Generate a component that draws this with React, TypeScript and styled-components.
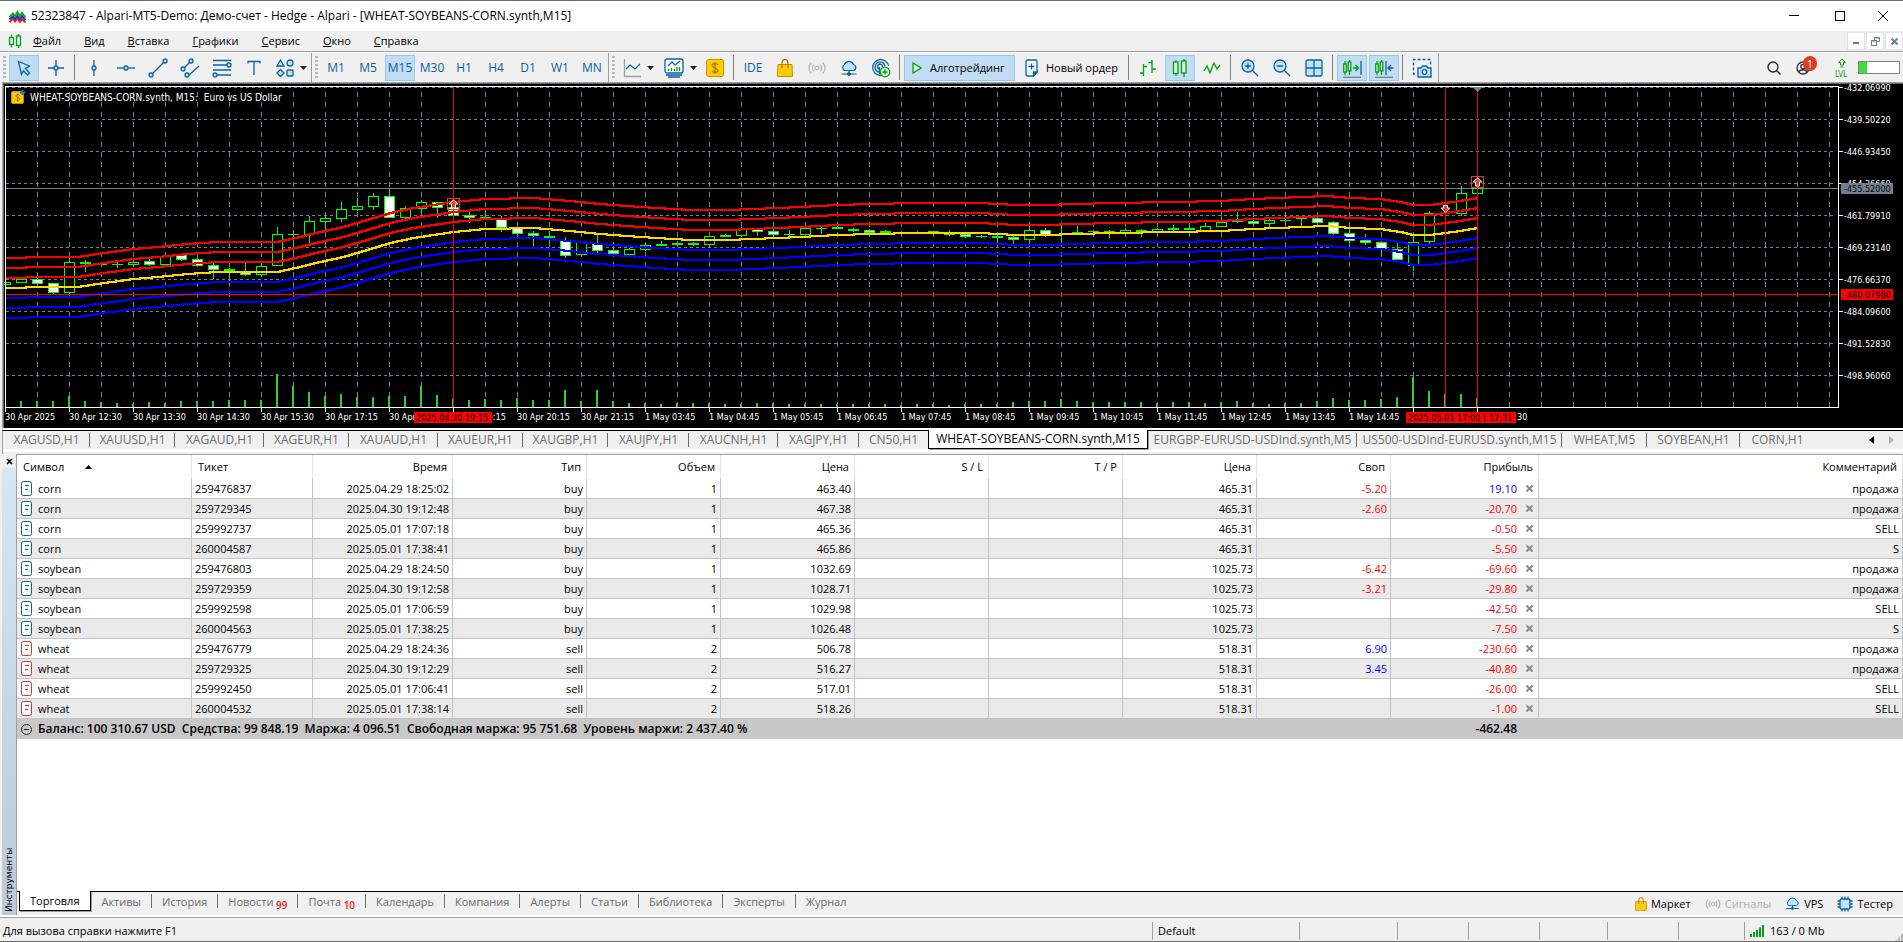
import React from "react";
import styled, { createGlobalStyle, css } from "styled-components";

const GlobalStyle = createGlobalStyle`
  *, *::before, *::after { box-sizing: border-box; }
  html, body { margin: 0; padding: 0; }
  body { background: #f0f0f0; color: #000; font: 12px/16px "Open Sans", "Liberation Sans", sans-serif; }
  button { font: inherit; color: inherit; background: none; border: 0; padding: 0; margin: 0; cursor: default; }
  a { color: inherit; text-decoration: none; }
  svg { display: block; flex: none; }
`;

const BLUE = "#0a62a3";
const SKY = "#bfe3fb";
const GREEN = "#00a019";
const SLATE = "#708090";

/* ---------- window frame ---------- */

const Window = styled.div`
  min-height: 100vh;
  display: flex;
  flex-direction: column;
  border-top: 1px solid #6d6d6d;
  border-bottom: 1px solid #6d6d6d;
`;

const TitleBar = styled.header`
  display: flex;
  align-items: center;
  height: 30px;
  padding: 0 0 0 9px;
  gap: 5px;
  background: #fff;
`;

const TitleText = styled.h1`
  margin: 0;
  font-size: 12px;
  line-height: 16px;
  font-weight: 400;
  white-space: nowrap;
`;

const CaptionButtons = styled.div`
  display: flex;
  margin-left: auto;
`;

const CaptionButton = styled.button`
  width: 46px;
  height: 30px;
  display: grid;
  place-items: center;
  &:last-child { width: 40px; }
`;

const MenuBar = styled.nav`
  display: flex;
  align-items: center;
  height: 21px;
  padding-left: 8px;
  border-bottom: 1px solid #a0a0a0;
`;

const MenuList = styled.div`
  display: flex;
  gap: 23px;
  margin-left: 11px;
`;

const MenuItem = styled.button`
  font-size: 11px;
  line-height: 16px;
`;

const MdiButtons = styled.div`
  display: flex;
  gap: 1px;
  margin-left: auto;
`;

const MdiButton = styled.button`
  width: 18px;
  height: 18px;
  display: grid;
  place-items: center;
  background: #fff;
  border: 1px solid #e3e3e3;
`;

/* ---------- toolbar ---------- */

const Toolbar = styled.div`
  display: flex;
  height: 30px;
  border-top: 1px solid #fff;
  padding-left: 1px;
`;

const ToolGroup = styled.div`
  display: flex;
  align-items: center;
  gap: 2px;
  padding-right: 1px;
  margin-right: 1px;
  border-right: 1px solid #a0a0a0;
`;

const Grip = styled.span`
  width: 3px;
  height: 24px;
  margin: 0 1px 0 2px;
  background: repeating-linear-gradient(#b8b8b8 0 2px, transparent 2px 4px);
`;

const ToolSeparator = styled.span`
  width: 1px;
  height: 25px;
  margin: 0 2px 0 1px;
  background: #808080;
`;

const ToolButton = styled.button<{ $active?: boolean; $width?: number }>`
  display: flex;
  align-items: center;
  justify-content: center;
  width: ${(p) => p.$width ?? 30}px;
  height: 26px;
  color: ${BLUE};
  border: 1px solid ${(p) => (p.$active ? "#90c8f6" : "transparent")};
  background: ${(p) => (p.$active ? "#c1dcf3" : "transparent")};
`;

const DropButton = styled(ToolButton)`
  width: 39px;
  justify-content: flex-start;
  padding-left: 4px;
  gap: 6px;
`;

const LabelButton = styled(ToolButton)`
  justify-content: flex-start;
  padding-left: 7px;
  color: #000;
  font-size: 11px;
  gap: 8px;
  white-space: nowrap;
`;

const ToolbarEnd = styled.div`
  display: flex;
  align-items: center;
  margin-left: auto;
  padding-right: 3px;
  gap: 9px;
`;

const RoundButton = styled.button<{ $width: number }>`
  position: relative;
  width: ${(p) => p.$width}px;
  height: 24px;
  display: grid;
  place-items: center start;
`;

const Badge = styled.span`
  position: absolute;
  top: 0;
  right: 9px;
  width: 14px;
  height: 15px;
  border-radius: 8px;
  background: #e03c20;
  color: #fff;
  font-size: 11px;
  line-height: 15px;
  text-align: center;
`;

const Battery = styled.span`
  width: 42px;
  height: 13px;
  border: 1px solid #808080;
  background: #fff;
  display: flex;

  &::before {
    content: "";
    width: 20%;
    background: #3ee03e;
  }
`;

/* ---------- chart ---------- */

const ChartFrame = styled.section`
  display: flex;
  height: 348px;
  margin-left: 2px;
  background: #000;
  border-top: 1px solid #a0a0a0;
  border-left: 1px solid #a0a0a0;
  border-bottom: 2px solid #fff;
`;

const ChartInner = styled.div`
  display: flex;
  flex: 1;
  min-width: 0;
  border-top: 1px solid #696969;
  border-left: 1px solid #696969;
`;

const Plot = styled.svg`
  flex: 1 1 0;
  min-width: 0;
  height: 344px;
`;

const PriceAxis = styled.svg`
  width: 65px;
  height: 344px;
`;

const AxisText = styled.text<{ $dark?: boolean; $large?: boolean }>`
  font: ${(p) => (p.$large ? 10 : 9)}px "DejaVu Sans Condensed", "DejaVu Sans", sans-serif;
  fill: ${(p) => (p.$dark ? "#000" : "#fff")};
`;

/* ---------- tab strips ---------- */

const tabBase = css`
  height: 18px;
  line-height: 18px;
  color: #6d6d6d;
  text-align: center;
  white-space: nowrap;
  position: relative;
`;

const ChartTabs = styled.nav`
  display: flex;
  height: 24px;
  margin-left: 2px;
  border-top: 1px solid #000;
  border-left: 1px solid #a0a0a0;
  background: linear-gradient(#f0f0f0 0 18px, #fff 18px 21px, #f0f0f0 21px);
`;

const divider = css`
  &::after {
    content: "";
    position: absolute;
    right: 0;
    top: 2px;
    width: 1px;
    height: 14px;
    background: #6d6d6d;
  }
`;

const ChartTab = styled.button<{ $width: number; $active?: boolean; $divided?: boolean }>`
  ${tabBase}
  width: ${(p) => p.$width}px;
  ${(p) => p.$divided && divider}
  ${(p) =>
    p.$active &&
    css`
      height: 19px;
      margin-top: -1px;
      color: #000;
      background: #fff;
      border: 1px solid #000;
      border-top: 0;
      box-shadow: 1px 1px 0 #a0a0a0;
    `}
`;

const TabScroll = styled.div`
  display: flex;
  align-items: center;
  gap: 15px;
  height: 18px;
  margin-left: auto;
  padding-right: 9px;
`;

const BottomTabs = styled.div`
  display: flex;
  height: 24px;
  border-top: 1px solid #000;
  padding: 0 10px 0 2px;
  background: #f0f0f0;
`;

const BottomTab = styled.button<{ $active?: boolean; $divided?: boolean }>`
  ${tabBase}
  height: 19px;
  padding: 0 11px 0 10px;
  font-size: 11px;
  ${(p) => p.$divided && divider}
  ${(p) =>
    p.$active &&
    css`
      height: 20px;
      margin-top: -1px;
      color: #000;
      background: #fff;
      border: 1px solid #000;
      border-top: 0;
      box-shadow: 1px 1px 0 #a0a0a0;
    `}
  sub {
    font-size: 10px;
    line-height: 0;
    font-weight: 600;
    color: #f01818;
  }
`;

const Services = styled.div`
  display: flex;
  align-items: center;
  gap: 14px;
  margin-left: auto;
`;

const ServiceLink = styled.a<{ $muted?: boolean }>`
  display: flex;
  align-items: center;
  gap: 4px;
  font-size: 11px;
  line-height: 16px;
  color: ${(p) => (p.$muted ? "#b0b0b0" : "#000")};
`;

/* ---------- toolbox ---------- */

const Toolbox = styled.section`
  flex: 1;
  display: flex;
  padding-left: 2px;
`;

const SideStrip = styled.div`
  width: 14px;
  display: flex;
  flex-direction: column;
`;

const SideClose = styled.button`
  height: 14px;
  display: grid;
  place-items: center;
`;

const SideCaption = styled.div`
  flex: 1;
  writing-mode: vertical-rl;
  transform: rotate(180deg);
  background: linear-gradient(to top, #d8e6f4, #bccad8);
  font: 9px/14px "DejaVu Sans", sans-serif;
  padding-inline-start: 3px;
`;

const ToolboxBody = styled.div`
  flex: 1;
  min-width: 0;
  display: flex;
  flex-direction: column;
  border-top: 1px solid #a0a0a0;
  border-left: 1px solid #a0a0a0;
  background: #fff;
`;

const TableArea = styled.div`
  flex: 1;
`;

const TradeTable = styled.table`
  width: 100%;
  table-layout: fixed;
  border-collapse: separate;
  border-spacing: 0;
`;

const HeadCell = styled.th<{ $left?: boolean }>`
  height: 24px;
  padding: 0 5px 0 6px;
  font-weight: 400;
  font-size: 11px;
  line-height: 16px;
  text-align: ${(p) => (p.$left ? "left" : "right")};
  border-right: 1px solid #e5e5e5;
  white-space: nowrap;
`;

const SortButton = styled.button`
  display: flex;
  align-items: center;
  gap: 21px;
`;

const Row = styled.tr`
  background: #fff;
  &:nth-child(even) { background: #eaeaea; }
`;

const tones = { plain: "#000", pos: "#0000ff", neg: "#ff0000" };

const Cell = styled.td<{ $left?: boolean; $tone?: keyof typeof tones }>`
  height: 20px;
  padding: 0 3px;
  font-size: 11px;
  line-height: 16px;
  color: ${(p) => tones[p.$tone ?? "plain"]};
  text-align: ${(p) => (p.$left ? "left" : "right")};
  border-right: 1px solid #c3c3c3;
  border-bottom: 1px solid #c3c3c3;
  white-space: nowrap;
`;

const SymbolBox = styled.span`
  display: flex;
  align-items: center;
  gap: 6px;
  padding-left: 1px;
`;

const ProfitBox = styled.span`
  display: flex;
  align-items: center;
  justify-content: flex-end;
  gap: 9px;
  padding-right: 2px;
`;

const CloseDeal = styled.button`
  display: block;
`;

const TotalCell = styled.td<{ $left?: boolean }>`
  height: 20px;
  padding: 0 22px 0 3px;
  background: #c8c8c8;
  font-size: 12px;
  line-height: 16px;
  font-weight: 600;
  text-align: ${(p) => (p.$left ? "left" : "right")};
  white-space: pre;
`;

/* ---------- status bar ---------- */

const StatusBar = styled.footer`
  display: flex;
  align-items: center;
  height: 26px;
  padding-top: 3px;
  border-top: 2px solid #fff;
  background: linear-gradient(#a0a0a0 0 1px, #f0f0f0 1px);
`;

const StatusHint = styled.span`
  flex: 1;
  padding-left: 3px;
  font-size: 11px;
`;

const StatusField = styled.span<{ $width: number }>`
  display: flex;
  align-items: center;
  gap: 6px;
  width: ${(p) => p.$width}px;
  height: 18px;
  padding-left: 5px;
  font-size: 11px;
  border-left: 1px solid #a0a0a0;
`;

const SizeGrip = styled.span`
  align-self: flex-end;
  width: 8px;
  height: 8px;
  margin-left: -8px;
  background: repeating-linear-gradient(90deg, #b8b8b8 0 2px, transparent 2px 3px);
  clip-path: polygon(100% 0, 100% 100%, 0 100%);
`;

/* ---------- icons ---------- */

type IconProps = { w?: number; h?: number; children: React.ReactNode };
const Icon = ({ w = 20, h = 20, children }: IconProps) => (
  <svg width={w} height={h} viewBox={`0 0 ${w} ${h}`} fill="none" stroke={BLUE} strokeWidth="1.3" aria-hidden="true">
    {children}
  </svg>
);

const AppLogo = () => (
  <svg width="17" height="13" viewBox="0 0 17 13" fill="none" strokeWidth="2" aria-hidden="true">
    <path d="M0.500 12 L4 8.500 L6 11.500 L8.500 8.500 L11 12 L13 9 L16.500 12.500" stroke="#e82020" />
    <path d="M0.500 9.500 L4 6 L6 9 L8.500 5.500 L11 9 L13 6 L16.500 10" stroke="#2038d0" />
    <path d="M0.500 7 L4 3.500 L6 6 L8.500 2 L11 6 L13 3 L16.500 7.500" stroke="#18a828" />
  </svg>
);
const CandlesIcon = () => (
  <Icon w={14} h={14}>
    <g stroke={GREEN}>
      <path d="M3.5 0.500v3M3.5 10.500v3M10.500 0v2M10.500 11.500v2.500" />
      <rect x="1.500" y="3.500" width="4" height="7" />
      <rect x="8.500" y="2" width="4" height="9.500" />
    </g>
  </Icon>
);
const Caret = () => (
  <svg width="7" height="4" aria-hidden="true"><path d="M0 0h7L3.500 4z" fill="#222" /></svg>
);
const Node = ({ x, y }: { x: number; y: number }) => <circle cx={x} cy={y} r="2" fill={SKY} />;

const CursorIcon = () => <Icon><path d="M4.500 3.500 L15.500 8 L11.500 10.500 L15.500 15 L13.500 17 L9.500 12.800 L7.500 16.500 Z" fill={SKY} /></Icon>;
const CrossIcon = () => <Icon><path d="M10 2v16M2 10h16" /><Node x={10} y={10} /></Icon>;
const VLineIcon = () => <Icon><path d="M10 2v16" /><Node x={10} y={10} /></Icon>;
const HLineIcon = () => <Icon><path d="M1 10h18" /><Node x={10} y={10} /></Icon>;
const TrendIcon = () => <Icon><path d="M3 17L17 3" /><Node x={3} y={17} /><Node x={17} y={3} /></Icon>;
const ChannelIcon = () => <Icon><path d="M3 11L11 3M8 18L19 8" /><Node x={3} y={11} /><Node x={11} y={3} /><Node x={7} y={17} /></Icon>;
const FiboIcon = () => <Icon><path d="M1 2.500h18M1 7h18M1 12h18M1 17h18" /><Node x={17} y={7} /><Node x={3} y={17} /></Icon>;
const TextIcon = () => <Icon><path d="M4 5.500V3.500H16V5.500M10 3.500V17" /></Icon>;
const ShapesIcon = () => (
  <Icon w={18}><path d="M4.500 2L8 8H1z" fill={SKY} /><circle cx="14" cy="5" r="3" fill={SKY} /><path d="M4.500 11.500L8 15L4.500 18.500L1 15z" fill={SKY} /><rect x="11" y="12" width="6" height="6" rx="1" fill={SKY} /></Icon>
);
const LineChartIcon = () => <Icon w={18}><path d="M1.500 1v17.500H18" stroke="#a0a0a0" /><path d="M3 11L7 7L12 11L17 6" /></Icon>;
const IndicatorsIcon = () => (
  <Icon w={20}><rect x="1" y="1" width="18" height="14" rx="2" fill="#fff" /><path d="M4 8L8 4L11 7L16 3" /><path d="M4.500 13v-2M7.500 13v-3M10.500 13v-2M13 13v-4M15.500 13v-4" stroke={GREEN} /><path d="M2 17h16M4 19h12" /></Icon>
);
const DollarGlyph = () => (
  <svg width="18" height="18" viewBox="0 0 18 18" fill="none" aria-hidden="true">
    <rect x="0.500" y="0.500" width="17" height="17" rx="2" fill="#ffcc00" stroke="#c89000" />
    <path d="M12 6c-1-2-6-2-6 .5S12 9 12 11.500s-5 2.500-6 .5M9 3v12" stroke="#b07800" strokeWidth="1.300" />
  </svg>
);
const BagIcon = ({ small = false }: { small?: boolean }) => (
  <svg width={small ? 12 : 16} height={small ? 14 : 18} viewBox="0 0 16 18" fill="none" aria-hidden="true">
    <path d="M1 5.500H15L15.500 17.500H0.500Z" fill="#ffcc00" stroke="#c89000" />
    <path d="M5 9V3.500a3 3 0 0 1 6 0V9" stroke="#b07800" strokeWidth="1.300" />
  </svg>
);
const SignalIcon = ({ w = 18, h = 14 }: { w?: number; h?: number }) => (
  <svg width={w} height={h} viewBox="0 0 18 14" fill="none" stroke="#b4b4b4" strokeWidth="1.300" aria-hidden="true">
    <circle cx="9" cy="7" r="1.800" /><path d="M5.800 3.800a4.500 4.500 0 0 0 0 6.400M12.200 3.800a4.500 4.500 0 0 1 0 6.400M3.300 1.500a7.800 7.800 0 0 0 0 11M14.700 1.500a7.800 7.800 0 0 1 0 11" />
  </svg>
);
const CloudIcon = ({ w = 18, h = 16 }: { w?: number; h?: number }) => (
  <svg width={w} height={h} viewBox="0 0 18 16" fill="none" stroke={BLUE} strokeWidth="1.200" aria-hidden="true">
    <path d="M4.500 10.500a3.500 3.500 0 0 1 0-6A4.800 4.800 0 0 1 13.500 4.500a3.200 3.200 0 0 1 .5 6z" fill={SKY} /><path d="M9 10.500v3M1.500 14h15M7 14l2-1.500 2 1.500-2 1.500z" />
  </svg>
);
const TargetIcon = () => (
  <Icon><path d="M10 17.500A8 8 0 1 1 17.500 8M8 14A5 5 0 1 1 14 8M8.500 11A2.500 2.500 0 1 1 11.500 9" /><path d="M8.500 9v7" /><circle cx="14" cy="14" r="4.800" fill="#d8f5d8" stroke={GREEN} /><path d="M11.500 14h5M14 11.500v5" stroke={GREEN} /></Icon>
);
const PlayIcon = () => <Icon w={10} h={12}><path d="M1 1L9 6L1 11z" fill="#e0f8e0" stroke={GREEN} /></Icon>;
const NewOrderIcon = () => (
  <Icon w={13} h={18}><path d="M2.500 1h8a1.500 1.500 0 0 1 1.500 1.500V13L8.500 17h-6A1.500 1.500 0 0 1 1 15.500v-13A1.500 1.500 0 0 1 2.500 1z" fill="#fff" /><path d="M8.500 17v-4H12z" fill={BLUE} /><path d="M3.500 7.500h6M6.500 4.500v6" /></Icon>
);
const BarsIcon = () => <Icon w={18} h={18}><path d="M4.500 5v12M1 14h3.500M4.500 7.500H8M13 1v13M9.500 3.500H13M13 10h4" stroke={GREEN} /></Icon>;
const BigCandles = () => (
  <Icon w={16} h={18}><g stroke={GREEN}><path d="M4 1v2M4 14v3M12 0v2M12 14v4" /><rect x="1.500" y="3" width="4.500" height="11.500" fill="#d8f5d8" /><rect x="9.500" y="2" width="4.500" height="12" fill="#d8f5d8" /></g></Icon>
);
const ZigIcon = () => <Icon w={18} h={14}><path d="M1 10L4 5L7 12L11 2L14 8L17 4" stroke={GREEN} /></Icon>;
const MagnifierIcon = ({ plus = false }: { plus?: boolean }) => (
  <Icon w={18} h={18}><circle cx="7" cy="7" r="6" fill={SKY} /><path d={plus ? "M4 7h6M7 4v6M11.500 11.500L17 17" : "M4 7h6M11.500 11.500L17 17"} /></Icon>
);
const TilesIcon = () => <Icon w={18} h={18}><rect x="1" y="1" width="16" height="16" rx="1.500" fill={SKY} /><path d="M9 1v16M1 9h16" /></Icon>;
const ShiftIcon = ({ back = false }: { back?: boolean }) => (
  <Icon w={20} h={20}>
    <g stroke={GREEN}><path d="M3 3v14M7.500 2v15" /><rect x="1.700" y="6" width="2.600" height="8" fill="#d8f5d8" /><rect x="6.200" y="4" width="2.600" height="9" fill="#d8f5d8" /></g>
    {back ? <path d="M12 3v14M14 10h5.500M17 7l-3 3 3 3" /> : <><path d="M11 10h5M13.500 7l3 3-3 3" stroke={GREEN} /><path d="M19 3v14" /></>}
    <path d="M1 19.300h18" stroke="#808080" />
  </Icon>
);
const CameraIcon = () => (
  <Icon><path d="M3 16H1.500V1.500H18.500V7" strokeDasharray="3 2" /><path d="M6 10h3l1.500-2h4l1.500 2h3v9H6z" fill={SKY} /><circle cx="12.500" cy="14" r="2.300" fill="#fff" /></Icon>
);
const SearchIcon = () => <Icon w={14} h={14}><g stroke="#222"><circle cx="6" cy="6" r="5" /><path d="M9.500 9.500L13.500 13.500" /></g></Icon>;
const UserIcon = () => <Icon w={14} h={14}><g stroke="#333"><circle cx="7" cy="7" r="6" /><circle cx="7" cy="5.500" r="2.200" /><path d="M3 11c1-3 7-3 8 0" /></g></Icon>;
const ChipIcon = () => (
  <Icon w={16} h={16}><path d="M5 0.500v15M8 0.500v15M11 0.500v15M0.500 5h15M0.500 8h15M0.500 11h15" /><rect x="3" y="3" width="10" height="10" rx="1.500" fill={SKY} /></Icon>
);
const NetIcon = () => <Icon w={14} h={12}><path d="M1 12V9M4 12V7M7 12V5M10 12V2.500M13 12V0" stroke={GREEN} strokeWidth="2" /></Icon>;
const DocIcon = ({ color }: { color: string }) => (
  <svg width="11" height="15" fill="none" stroke={color} aria-hidden="true"><rect x="0.500" y="0.500" width="10" height="14" rx="2" fill="#fff" /><path d="M4 4.500h4M4 8.500h3" /></svg>
);
const SmallCross = ({ color = "#8a8a8a" }: { color?: string }) => (
  <svg width="7" height="7" stroke={color} strokeWidth="2" aria-hidden="true"><path d="M0.500 0.500l6 6M6.500 0.500l-6 6" /></svg>
);

/* ---------- chart data ---------- */

// x, body top, body bottom, wick high, wick low, filled
type Candle = [number, number, number, number, number, 0 | 1];
const candles: Candle[] = [
  [5, 282, 284, 282, 284, 0], [21, 279, 282, 277, 282, 0], [37, 279, 283, 278, 284, 1], [53, 283, 292, 283, 293, 1],
  [69, 262, 292, 254, 293, 0], [85, 262, 263, 260, 271, 0], [101, 264, 264, 263, 265, 0], [117, 264, 264, 262, 267, 0],
  [133, 262, 264, 260, 265, 0], [149, 261, 264, 259, 265, 1], [165, 256, 264, 256, 264, 0], [181, 255, 259, 255, 260, 1],
  [197, 259, 265, 256, 265, 1], [213, 265, 269, 261, 278, 1], [229, 269, 270, 268, 280, 0], [245, 271, 274, 263, 275, 1],
  [261, 266, 274, 263, 275, 0], [277, 234, 265, 227, 265, 0], [293, 234, 234, 230, 252, 0], [309, 221, 234, 216, 243, 0],
  [325, 218, 221, 214, 229, 0], [341, 209, 218, 202, 221, 0], [357, 206, 209, 198, 210, 0], [373, 196, 206, 193, 209, 0],
  [389, 196, 217, 189, 217, 1], [405, 208, 217, 206, 218, 0], [421, 202, 208, 200, 213, 0], [437, 202, 207, 202, 217, 1],
  [453, 207, 215, 204, 215, 1], [469, 215, 217, 211, 222, 1], [485, 217, 217, 210, 217, 0], [501, 218, 227, 216, 231, 1],
  [517, 228, 233, 228, 234, 1], [533, 233, 235, 231, 245, 1], [549, 236, 237, 231, 243, 1], [565, 240, 255, 237, 257, 1],
  [581, 242, 254, 242, 255, 0], [597, 243, 250, 234, 252, 1], [613, 250, 253, 248, 254, 1], [629, 249, 254, 248, 255, 0],
  [645, 245, 249, 243, 250, 0], [661, 244, 245, 241, 245, 0], [677, 243, 244, 241, 245, 0], [693, 243, 244, 242, 245, 0],
  [709, 236, 244, 236, 244, 0], [725, 235, 236, 234, 236, 0], [741, 229, 235, 227, 235, 0], [757, 229, 231, 229, 235, 1],
  [773, 231, 234, 229, 235, 1], [789, 234, 234, 230, 235, 0], [805, 228, 234, 228, 234, 0], [821, 228, 228, 226, 233, 0],
  [837, 227, 228, 226, 228, 0], [853, 229, 230, 228, 231, 1], [869, 230, 232, 229, 233, 1], [885, 231, 232, 230, 233, 0],
  [901, 232, 232, 231, 233, 0], [917, 232, 233, 231, 233, 0], [933, 231, 232, 231, 235, 0], [949, 232, 234, 230, 235, 0],
  [965, 234, 236, 234, 237, 1], [981, 236, 236, 235, 237, 0], [997, 236, 237, 235, 241, 0], [1013, 237, 239, 236, 243, 1],
  [1029, 230, 239, 225, 241, 0], [1045, 230, 234, 228, 236, 1], [1061, 234, 234, 225, 241, 0], [1077, 232, 233, 226, 234, 0],
  [1093, 231, 231, 230, 233, 0], [1109, 231, 232, 230, 237, 0], [1125, 230, 232, 228, 232, 0], [1141, 230, 231, 229, 236, 0],
  [1157, 229, 231, 228, 231, 0], [1173, 228, 229, 225, 230, 0], [1189, 228, 229, 225, 229, 0], [1205, 226, 230, 223, 230, 0],
  [1221, 222, 226, 217, 226, 0], [1237, 221, 221, 212, 222, 0], [1253, 221, 223, 220, 224, 1], [1269, 220, 223, 219, 226, 0],
  [1285, 220, 220, 214, 221, 0], [1301, 218, 218, 218, 227, 0], [1317, 218, 222, 217, 222, 1], [1333, 222, 233, 221, 235, 1],
  [1349, 233, 240, 227, 243, 1], [1365, 240, 242, 234, 244, 1], [1381, 242, 248, 241, 255, 1], [1397, 249, 259, 243, 260, 1],
  [1413, 242, 265, 236, 270, 0], [1429, 213, 241, 211, 244, 0], [1461, 193, 213, 186, 215, 0], [1477, 188, 193, 188, 194, 0],
];

const midLine: [number, number][] = [
  [5, 288], [45, 287], [77, 287], [97, 284], [133, 279], [157, 277], [187, 274], [217, 272], [277, 272], [295, 268],
  [320, 262], [343, 257], [360, 252], [390, 243], [413, 238], [453, 232], [485, 229], [533, 228], [570, 231], [600, 234],
  [640, 237], [690, 240], [725, 240], [753, 239], [800, 237], [837, 235], [870, 234], [917, 233], [980, 233], [1015, 235],
  [1043, 235], [1110, 233], [1173, 232], [1220, 231], [1253, 229], [1300, 227], [1327, 226], [1350, 228], [1380, 229],
  [1400, 232], [1413, 235], [1430, 235], [1445, 233], [1460, 231], [1477, 228],
];
const bands = [
  { shift: -30, color: "#ff0000" }, { shift: -20, color: "#ff0000" }, { shift: -10, color: "#ff0000" },
  { shift: 0, color: "#ffd700" },
  { shift: 10, color: "#0000ff" }, { shift: 20, color: "#0000ff" }, { shift: 30, color: "#0000ff" },
];

// the band as a staircase on whole pixels
const stairs = (shift: number) => {
  let d = `M5 ${midLine[0][1] + shift}`;
  let last = midLine[0][1];
  for (let i = 1; i < midLine.length; i++) {
    const [x0, y0] = midLine[i - 1];
    const [x1, y1] = midLine[i];
    for (let x = x0; x <= x1; x++) {
      const y = Math.round(y0 + ((y1 - y0) * (x - x0)) / (x1 - x0));
      if (y !== last) {
        d += `H${x}V${y + shift}`;
        last = y;
      }
    }
  }
  return `${d}H1477`;
};

// bar heights, one per 16px step from x = 21
const volumes = [
  6, 6, 6, 11, 6, 5, 4, 3, 5, 4, 6, 6, 6, 7, 7, 7, 33, 21, 15, 11, 13, 10, 10, 11, 11, 21, 12, 8, 7, 8, 7, 9, 7, 7, 17, 6,
  17, 6, 4, 4, 3, 4, 4, 4, 3, 3, 4, 4, 3, 3, 3, 3, 3, 3, 3, 2, 3, 3, 2, 3, 3, 3, 5, 6, 6, 8, 6, 5, 5, 5, 5, 4, 5, 5, 4, 5,
  6, 4, 3, 4, 4, 6, 9, 7, 7, 8, 10, 30, 16, 13, 13, 9,
];

const timeLabels = [
  "30 Apr 2025", "30 Apr 12:30", "30 Apr 13:30", "30 Apr 14:30", "30 Apr 15:30", "30 Apr 17:15", "30 Apr 18:15",
  "30 Apr 19:15", "30 Apr 20:15", "30 Apr 21:15", "1 May 03:45", "1 May 04:45", "1 May 05:45", "1 May 06:45",
  "1 May 07:45", "1 May 08:45", "1 May 09:45", "1 May 10:45", "1 May 11:45", "1 May 12:45", "1 May 13:45",
  "1 May 14:45", "", "1 May 17:30",
];
const priceLabels = [
  "-432.06990", "-439.50220", "-446.93450", "-454.36660", "-461.79910", "-469.23140", "-476.66370", "-484.09600",
  "-491.52830", "-498.96060",
];

const ORIGIN = "translate(-4 -84)";

const TimeFlag = ({ x, w, text }: { x: number; w: number; text: string }) => (
  <>
    <rect x={x} y="412" width={w} height="11" fill="#ff0000" />
    <AxisText $dark x={x + 2} y="421">{text}</AxisText>
  </>
);

const ChartView = () => (
  <ChartInner>
    <Plot role="img" aria-label="WHEAT-SOYBEANS-CORN.synth, M15">
      <g transform={ORIGIN} shapeRendering="crispEdges">
        <g stroke={SLATE} strokeDasharray="5 5">
          {Array.from({ length: 57 }, (_, i) => (
            <path key={i} d={`M${37.5 + 32 * i} 92V407`} />
          ))}
        </g>
        <g stroke={SLATE} strokeDasharray="3 3">
          {priceLabels.map((_, i) => (
            <line key={i} x1="6" x2="100%" y1={87.5 + 32 * i} y2={87.5 + 32 * i} />
          ))}
        </g>
        <g fill="#32cd32">
          {volumes.map((v, i) => (
            <rect key={i} x={20 + 16 * i} y={407 - v} width="2" height={v} />
          ))}
        </g>
        <path d="M6 188.500H3000" stroke={SLATE} />
        <g stroke="#00ff00">
          {candles.map(([x, top, bottom, high, low, filled]) => (
            <g key={x}>
              <path d={`M${x + 0.5} ${high}V${top}M${x + 0.5} ${bottom}V${low + 1}`} />
              {bottom > top + 1 ? (
                <rect x={x - 4.5} y={top + 0.5} width="10" height={bottom - top} fill={filled ? "#fff" : "#000"} />
              ) : (
                <rect x={x - 5} y={top} width="11" height={bottom - top + 1} fill="#00ff00" stroke="none" />
              )}
            </g>
          ))}
        </g>
        <g fill="none" strokeWidth="2">
          {bands.map((b) => (
            <path key={b.shift} stroke={b.color} d={stairs(b.shift)} />
          ))}
        </g>
        <path d="M6 294.500H3000M453.500 87V407M1445.500 87V407M1477.500 87V407" stroke="#ff0000" />
        <path d="M1473 87h9v1h-1v1h-1v1h-1v1h-1v1h-1v-1h-1v-1h-1v-1h-1v-1h-1z" fill={SLATE} />
        <path d="M5.500 411V86.500H3000M5 407.500H3000" stroke="#fff" fill="none" />
        <g stroke="#fff">
          {timeLabels.map((_, i) => (
            <path key={i} d={`M${5.5 + 64 * i} 408v4`} />
          ))}
        </g>
        <g stroke="#e04020" fill="none">
          <rect x="447.500" y="198.500" width="12" height="11" />
          <rect x="1471.500" y="176.500" width="12" height="11" />
        </g>
      </g>
      <g transform={ORIGIN} stroke="#fff" fill="#e04020">
        <path d="M453.500 200l4.500 4h-2.500v4h-4v-4h-2.500z" />
        <path d="M1477.500 178l4.500 4h-2.500v4h-4v-4h-2.500z" />
        <path d="M1443.500 205.500h4v2.500h2.500l-4.500 4.500l-4.500-4.500h2.500z" />
      </g>
      <g transform={ORIGIN}>
        <rect x="11.500" y="91.500" width="12" height="12" rx="1.500" fill="#ffcc00" stroke="#c89000" />
        <path d="M20 95.500c-1-1.500-4.500-1-4.500.5s4.500 1.200 4.500 3-4 1.800-4.700.5M17.700 93.500v8.500" stroke="#b07800" fill="none" />
        <path d="M22.500 90v5M20 92.500h5" stroke="#1478c8" strokeWidth="2" />
        <AxisText $large x="30" y="101" xmlSpace="preserve">WHEAT-SOYBEANS-CORN.synth, M15:&nbsp; Euro vs US Dollar</AxisText>
        {timeLabels.map((t, i) => (
          <AxisText key={i} x={5 + 64 * i} y="420">{t}</AxisText>
        ))}
        <TimeFlag x={1438} w={78} text="2025.05.01 17:31" />
        <TimeFlag x={1406} w={78} text="2025.05.01 17:00" />
        <TimeFlag x={414} w={78} text="2025.04.30 19:15" />
      </g>
    </Plot>
    <PriceAxis aria-label="Цена">
      <g transform="translate(0 -84)" shapeRendering="crispEdges">
        <path d="M0.500 86V408" stroke="#fff" />
        {priceLabels.map((p, i) => (
          <g key={p}>
            <path d={`M1 ${87.5 + 32 * i}h4`} stroke="#fff" />
            <AxisText x="6" y={91 + 32 * i}>{p}</AxisText>
          </g>
        ))}
        <rect x="3" y="183" width="52" height="11" fill={SLATE} />
        <rect x="3" y="289" width="52" height="11" fill="#ff0000" />
        <AxisText $dark x="6" y="192">-455.52000</AxisText>
        <AxisText $dark x="6" y="298">-480.07980</AxisText>
      </g>
    </PriceAxis>
  </ChartInner>
);

/* ---------- trade data ---------- */

type Deal = { symbol: string; ticket: string; time: string; type: "buy" | "sell"; volume: string; open: string; price: string; swap: string; profit: string; comment: string };
const deal = (symbol: string, ticket: string, time: string, open: string, price: string, swap: string, profit: string, comment: string): Deal => ({
  symbol, ticket, time, open, price, swap, profit, comment,
  type: symbol === "wheat" ? "sell" : "buy",
  volume: symbol === "wheat" ? "2" : "1",
});
const deals: Deal[] = [
  deal("corn", "259476837", "2025.04.29 18:25:02", "463.40", "465.31", "-5.20", "19.10", "продажа"),
  deal("corn", "259729345", "2025.04.30 19:12:48", "467.38", "465.31", "-2.60", "-20.70", "продажа"),
  deal("corn", "259992737", "2025.05.01 17:07:18", "465.36", "465.31", "", "-0.50", "SELL"),
  deal("corn", "260004587", "2025.05.01 17:38:41", "465.86", "465.31", "", "-5.50", "S"),
  deal("soybean", "259476803", "2025.04.29 18:24:50", "1032.69", "1025.73", "-6.42", "-69.60", "продажа"),
  deal("soybean", "259729359", "2025.04.30 19:12:58", "1028.71", "1025.73", "-3.21", "-29.80", "продажа"),
  deal("soybean", "259992598", "2025.05.01 17:06:59", "1029.98", "1025.73", "", "-42.50", "SELL"),
  deal("soybean", "260004563", "2025.05.01 17:38:25", "1026.48", "1025.73", "", "-7.50", "S"),
  deal("wheat", "259476779", "2025.04.29 18:24:36", "506.78", "518.31", "6.90", "-230.60", "продажа"),
  deal("wheat", "259729325", "2025.04.30 19:12:29", "516.27", "518.31", "3.45", "-40.80", "продажа"),
  deal("wheat", "259992450", "2025.05.01 17:06:41", "517.01", "518.31", "", "-26.00", "SELL"),
  deal("wheat", "260004532", "2025.05.01 17:38:14", "518.26", "518.31", "", "-1.00", "SELL"),
];
const columnWidths = [175, 121, 140, 134, 134, 134, 134, 134, 134, 134, 148];
const headings = ["Время", "Тип", "Объем", "Цена", "S / L", "T / P", "Цена", "Своп", "Прибыль", "Комментарий"];
const tone = (v: string) => (v.startsWith("-") ? "neg" : "pos");

const chartTabs: { label: string; width: number; active?: boolean }[] = [
  { label: "XAGUSD,H1", width: 87 }, { label: "XAUUSD,H1", width: 85 }, { label: "XAGAUD,H1", width: 89 },
  { label: "XAGEUR,H1", width: 85 }, { label: "XAUAUD,H1", width: 89 }, { label: "XAUEUR,H1", width: 85 },
  { label: "XAUGBP,H1", width: 85 }, { label: "XAUJPY,H1", width: 81 }, { label: "XAUCNH,H1", width: 89 },
  { label: "XAGJPY,H1", width: 81 }, { label: "CN50,H1", width: 69 },
  { label: "WHEAT-SOYBEANS-CORN.synth,M15", width: 220, active: true },
  { label: "EURGBP-EURUSD-USDInd.synth,M5", width: 209 }, { label: "US500-USDInd-EURUSD.synth,M15", width: 205 },
  { label: "WHEAT,M5", width: 85 }, { label: "SOYBEAN,H1", width: 93 }, { label: "CORN,H1", width: 75 },
];

const bottomTabs: { label: string; count?: string }[] = [
  { label: "Активы" }, { label: "История" }, { label: "Новости", count: "99" }, { label: "Почта", count: "10" },
  { label: "Календарь" }, { label: "Компания" }, { label: "Алерты" }, { label: "Статьи" }, { label: "Библиотека" },
  { label: "Эксперты" }, { label: "Журнал" },
];

const menus = ["Файл", "Вид", "Вставка", "Графики", "Сервис", "Окно", "Справка"];
const periods = ["M1", "M5", "M15", "M30", "H1", "H4", "D1", "W1", "MN"];

export default function App() {
  return (
    <>
      <GlobalStyle />
      <Window>
        <TitleBar>
          <AppLogo />
          <TitleText>52323847 - Alpari-MT5-Demo: Демо-счет - Hedge - Alpari - [WHEAT-SOYBEANS-CORN.synth,M15]</TitleText>
          <CaptionButtons>
            <CaptionButton aria-label="Свернуть"><svg width="10" height="10"><path d="M0 4.500h10" stroke="#000" /></svg></CaptionButton>
            <CaptionButton aria-label="Развернуть"><svg width="10" height="10"><rect x="0.500" y="0.500" width="9" height="9" fill="none" stroke="#000" /></svg></CaptionButton>
            <CaptionButton aria-label="Закрыть"><svg width="10" height="10"><path d="M0 0L10 10M10 0L0 10" stroke="#000" /></svg></CaptionButton>
          </CaptionButtons>
        </TitleBar>

        <MenuBar>
          <CandlesIcon />
          <MenuList>
            {menus.map((m) => (
              <MenuItem key={m}><u>{m[0]}</u>{m.slice(1)}</MenuItem>
            ))}
          </MenuList>
          <MdiButtons>
            <MdiButton aria-label="Свернуть график"><svg width="8" height="8"><path d="M1 6h6" stroke={SLATE} strokeWidth="2" /></svg></MdiButton>
            <MdiButton aria-label="Восстановить график"><svg width="9" height="9" fill="none" stroke={SLATE}><path d="M3.500 3V0.500h5v4H6.500M3 1h6" /><rect x="0.500" y="3.500" width="5" height="5" /><path d="M0 4h6" /></svg></MdiButton>
            <MdiButton aria-label="Закрыть график"><SmallCross color={SLATE} /></MdiButton>
          </MdiButtons>
        </MenuBar>

        <Toolbar role="toolbar">
          <ToolGroup>
            <Grip />
            <ToolButton $active aria-label="Курсор"><CursorIcon /></ToolButton>
            <ToolButton aria-label="Перекрестие"><CrossIcon /></ToolButton>
            <ToolSeparator />
            <ToolButton aria-label="Вертикальная линия"><VLineIcon /></ToolButton>
            <ToolButton aria-label="Горизонтальная линия"><HLineIcon /></ToolButton>
            <ToolButton aria-label="Трендовая линия"><TrendIcon /></ToolButton>
            <ToolButton aria-label="Канал"><ChannelIcon /></ToolButton>
            <ToolButton aria-label="Уровни Фибоначчи"><FiboIcon /></ToolButton>
            <ToolButton aria-label="Текст"><TextIcon /></ToolButton>
            <DropButton aria-label="Фигуры"><ShapesIcon /><Caret /></DropButton>
          </ToolGroup>
          <ToolGroup>
            <Grip />
            {periods.map((p) => (
              <ToolButton key={p} $active={p === "M15"}>{p}</ToolButton>
            ))}
          </ToolGroup>
          <ToolGroup>
            <Grip />
            <DropButton aria-label="Тип графика"><LineChartIcon /><Caret /></DropButton>
            <DropButton aria-label="Индикаторы"><IndicatorsIcon /><Caret /></DropButton>
            <ToolButton aria-label="Символы"><DollarGlyph /></ToolButton>
            <ToolSeparator />
            <ToolButton>IDE</ToolButton>
            <ToolButton aria-label="Маркет"><BagIcon /></ToolButton>
            <ToolButton aria-label="Сигналы"><SignalIcon /></ToolButton>
            <ToolButton aria-label="VPS"><CloudIcon /></ToolButton>
            <ToolButton aria-label="Копирование"><TargetIcon /></ToolButton>
            <ToolSeparator />
            <LabelButton $active $width={111}><PlayIcon />Алготрейдинг</LabelButton>
            <LabelButton $width={108}><NewOrderIcon />Новый ордер</LabelButton>
            <ToolSeparator />
            <ToolButton aria-label="Бары"><BarsIcon /></ToolButton>
            <ToolButton $active aria-label="Свечи"><BigCandles /></ToolButton>
            <ToolButton aria-label="Линия"><ZigIcon /></ToolButton>
            <ToolSeparator />
            <ToolButton aria-label="Приблизить"><MagnifierIcon plus /></ToolButton>
            <ToolButton aria-label="Отдалить"><MagnifierIcon /></ToolButton>
            <ToolButton aria-label="Плитка"><TilesIcon /></ToolButton>
            <ToolSeparator />
            <ToolButton $active aria-label="Автопрокрутка"><ShiftIcon /></ToolButton>
            <ToolButton $active aria-label="Сдвиг графика"><ShiftIcon back /></ToolButton>
            <ToolSeparator />
            <ToolButton aria-label="Снимок"><CameraIcon /></ToolButton>
          </ToolGroup>
          <ToolbarEnd>
            <RoundButton $width={20} aria-label="Поиск"><SearchIcon /></RoundButton>
            <RoundButton $width={30} aria-label="Профиль"><UserIcon /><Badge>1</Badge></RoundButton>
            <svg width="14" height="20" fill="none" stroke={GREEN} aria-hidden="true">
              <path d="M7 1L10.500 4.500H8.500V7H5.500V4.500H3.500zM5.500 9h3" />
              <text x="0" y="19" fontSize="8" fill={GREEN} stroke="none" fontFamily="DejaVu Sans Condensed">LVL</text>
            </svg>
            <Battery />
          </ToolbarEnd>
        </Toolbar>

        <ChartFrame><ChartView /></ChartFrame>

        <ChartTabs>
          {chartTabs.map((t, i) => (
            <ChartTab key={t.label} $width={t.width} $active={t.active} $divided={!t.active && i !== 10 && i < 16}>
              {t.label}
            </ChartTab>
          ))}
          <TabScroll>
            <button aria-label="Назад"><svg width="5" height="8"><path d="M5 0v8L0 4z" fill="#000" /></svg></button>
            <button aria-label="Вперед"><svg width="5" height="8"><path d="M0 0v8L5 4z" fill="#b0b0b0" /></svg></button>
          </TabScroll>
        </ChartTabs>

        <Toolbox>
          <SideStrip>
            <SideClose aria-label="Закрыть панель"><svg width="7" height="7" stroke="#000" strokeWidth="1.600"><path d="M1 1l5 5M6 1l-5 5" /></svg></SideClose>
            <SideCaption>Инструменты</SideCaption>
          </SideStrip>
          <ToolboxBody>
            <TableArea>
              <TradeTable>
                <colgroup>
                  {columnWidths.map((w, i) => (
                    <col key={i} width={w} />
                  ))}
                  <col />
                </colgroup>
                <thead>
                  <tr>
                    <HeadCell $left scope="col">
                      <SortButton>Символ <svg width="7" height="4"><path d="M0 4h7L3.500 0z" /></svg></SortButton>
                    </HeadCell>
                    <HeadCell $left scope="col">Тикет</HeadCell>
                    {headings.map((h, i) => (
                      <HeadCell key={i} scope="col">{h}</HeadCell>
                    ))}
                  </tr>
                </thead>
                <tbody>
                  {deals.map((d) => (
                    <Row key={d.ticket}>
                      <Cell $left><SymbolBox><DocIcon color={d.type === "buy" ? BLUE : "#e03030"} />{d.symbol}</SymbolBox></Cell>
                      <Cell $left>{d.ticket}</Cell>
                      <Cell>{d.time}</Cell>
                      <Cell>{d.type}</Cell>
                      <Cell>{d.volume}</Cell>
                      <Cell>{d.open}</Cell>
                      <Cell />
                      <Cell />
                      <Cell>{d.price}</Cell>
                      <Cell $tone={tone(d.swap)}>{d.swap}</Cell>
                      <Cell $tone={tone(d.profit)}>
                        <ProfitBox>{d.profit}<CloseDeal aria-label={`Закрыть ${d.ticket}`}><SmallCross /></CloseDeal></ProfitBox>
                      </Cell>
                      <Cell>{d.comment}</Cell>
                    </Row>
                  ))}
                </tbody>
                <tfoot>
                  <tr>
                    <TotalCell $left colSpan={10}>
                      <SymbolBox>
                        <svg width="11" height="11" fill="none" stroke="#222"><circle cx="5.500" cy="5.500" r="5" /><path d="M3 5.500h5" /></svg>
                        {"Баланс: 100 310.67 USD  Средства: 99 848.19  Маржа: 4 096.51  Свободная маржа: 95 751.68  Уровень маржи: 2 437.40 %"}
                      </SymbolBox>
                    </TotalCell>
                    <TotalCell>-462.48</TotalCell>
                    <TotalCell />
                  </tr>
                </tfoot>
              </TradeTable>
            </TableArea>
            <BottomTabs>
              <BottomTab $active>Торговля</BottomTab>
              {bottomTabs.map((t, i) => (
                <BottomTab key={t.label} $divided={i < bottomTabs.length - 1}>
                  {t.label}{t.count && <sub> {t.count}</sub>}
                </BottomTab>
              ))}
              <Services>
                <ServiceLink href="#market"><BagIcon small />Маркет</ServiceLink>
                <ServiceLink href="#signals" $muted><SignalIcon w={16} h={12} />Сигналы</ServiceLink>
                <ServiceLink href="#vps"><CloudIcon w={15} h={15} />VPS</ServiceLink>
                <ServiceLink href="#tester"><ChipIcon />Тестер</ServiceLink>
              </Services>
            </BottomTabs>
          </ToolboxBody>
        </Toolbox>

        <StatusBar>
          <StatusHint>Для вызова справки нажмите F1</StatusHint>
          <StatusField $width={147}>Default</StatusField>
          <StatusField $width={98} />
          <StatusField $width={71} />
          <StatusField $width={71} />
          <StatusField $width={68} />
          <StatusField $width={71} />
          <StatusField $width={66} />
          <StatusField $width={159}><NetIcon />163 / 0 Mb</StatusField>
          <SizeGrip />
        </StatusBar>
      </Window>
    </>
  );
}
